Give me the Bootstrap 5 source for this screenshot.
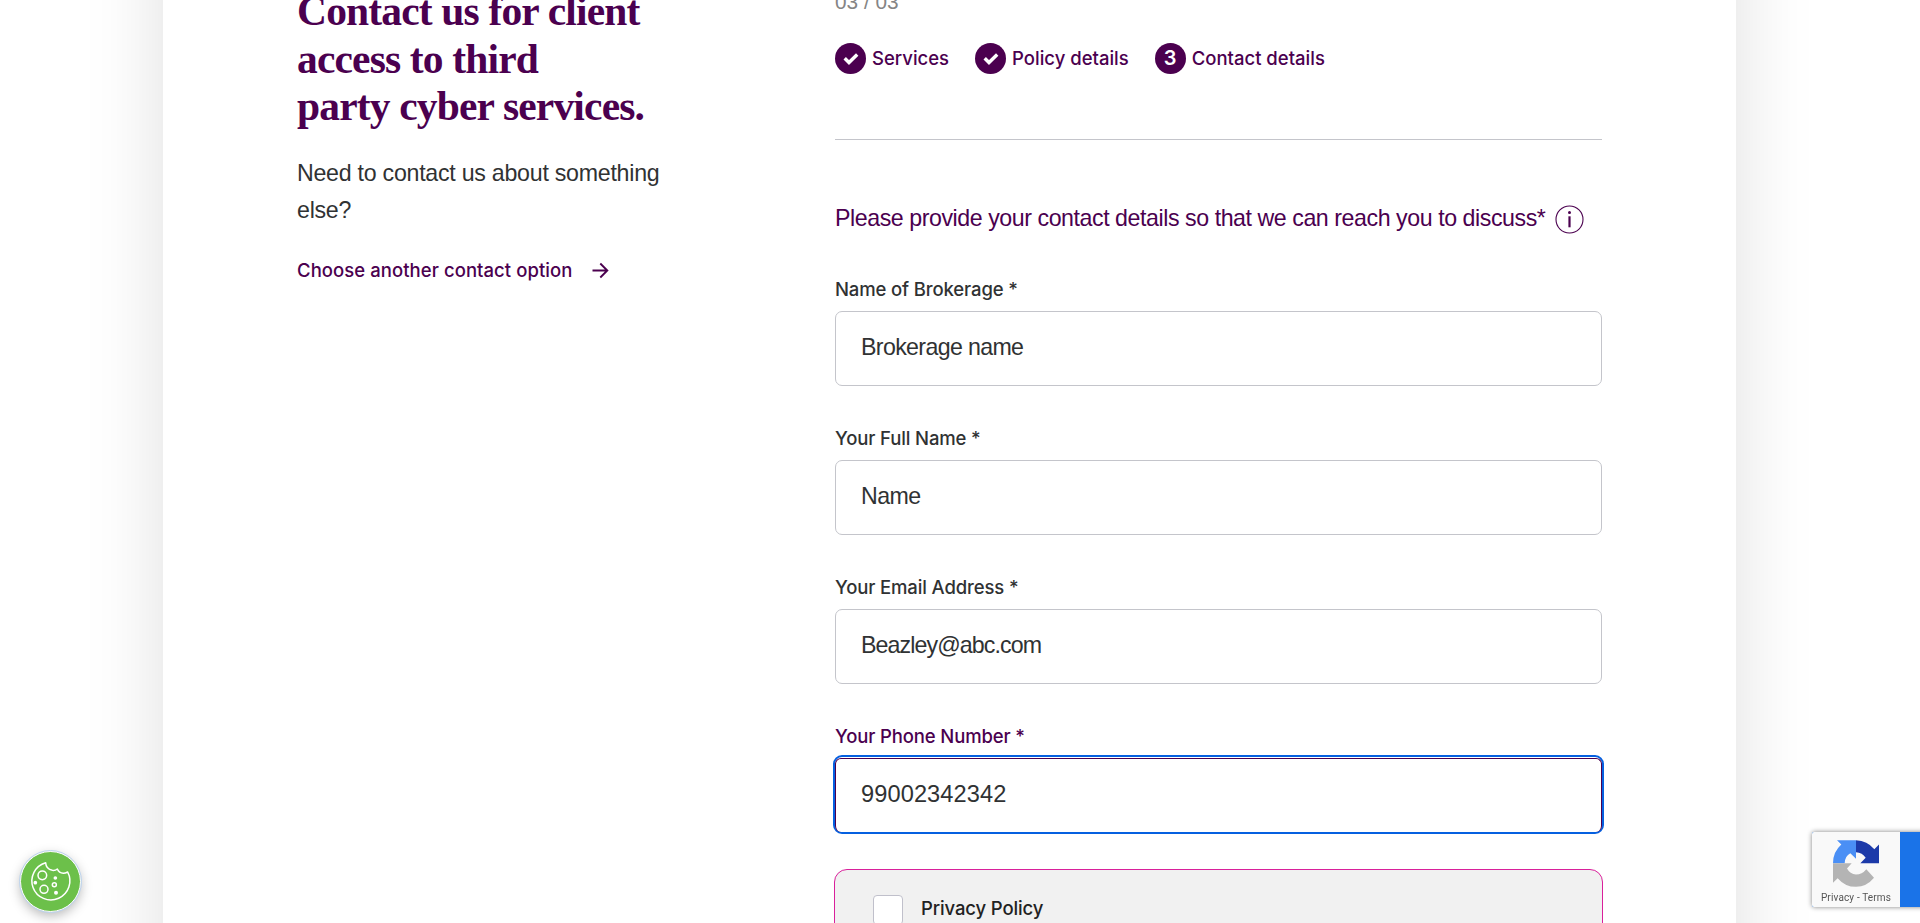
<!DOCTYPE html>
<html lang="en">
<head>
<meta charset="utf-8">
<meta name="viewport" content="width=device-width, initial-scale=1">
<title>Contact us</title>
<link href="https://cdn.jsdelivr.net/npm/bootstrap@5.3.0/dist/css/bootstrap.min.css" rel="stylesheet">
<style>
  :root { --plum: #4b004f; --ink: #303233; --line: #c4c5cb; --focus: #0560e0; }
  body { font-family: "Liberation Sans", sans-serif; color: var(--ink); font-size: 23.2px; background: #fff; }
  .viewport { height: 923px; }
  .panel { width: 1573px; height: 1400px; margin: -200px 0 0 163px; padding: 0 134px; background: #fff; box-shadow: 0 0 75px rgba(0,0,0,.13); }
  .intro { width: 400px; padding-top: 188px; }
  .intro h1 { font: 700 41.5px/47.5px "Liberation Serif", serif; letter-spacing: -.83px; color: var(--plum); margin: 0; white-space: nowrap; }
  .intro p { line-height: 37.6px; margin: 24px 0 28px; letter-spacing: -.26px; }
  .medium { font: 500 18.5px/25px Inter, sans-serif; letter-spacing: -.13px; }
  .plum { color: var(--plum); }
  .other-option { letter-spacing: .06px; }
  .form-col { width: 767px; padding-top: 190px; }
  .count { font-size: 20.8px; line-height: 24px; color: #858585; }
  .steps { margin-top: 29px; gap: 26px; height: 31px; letter-spacing: 0; }
  .step { gap: 6px; }
  .dot { width: 31px; height: 31px; background: var(--plum); color: #fff; font-weight: 600; font-size: 20px; }
  .rule { height: 1px; background: var(--line); margin-top: 65px; }
  .question { margin-top: 63px; height: 30px; line-height: 30px; letter-spacing: -.445px; white-space: nowrap; margin-bottom: 44px; }
  .field { margin-bottom: 40px; }
  .field label { display: block; margin-bottom: 9px; }
  .entry.form-control { height: 75px; border: 1px solid var(--line); border-radius: 7px; padding: 0 25px 2px; font-size: 23.2px; letter-spacing: -.9px; color: var(--ink); box-shadow: none; }
  #brokerage { letter-spacing: -.65px; }
  #fullname { letter-spacing: -.6px; }
  .ring { margin: -3px -2px 35px; border: 2px solid var(--focus); border-radius: 9px; padding-top: 1px; height: 79px; }
  .ring .entry.form-control { height: 74px; border-color: var(--plum); border-bottom: 0; border-radius: 6px; font-size: 23.6px; letter-spacing: .1px; padding-bottom: 3px; }
  .consent { height: 200px; margin: 0 -1px; border: 1px solid #d9209b; border-radius: 13px; background: #f1f1f1; padding: 25px 38px; color: #222; }
  .tick.form-check-input { width: 30px; height: 30px; border: 1px solid #c0c0cb; border-radius: 4px; margin: 0 18px 0 0; }
  .consent label { line-height: 27px; }
  .cookie { position: fixed; left: 19.5px; top: 850.5px; width: 61px; height: 61px; border: 1.5px solid #fff; outline: .5px solid #bcd3ee; background: #6cc04a; box-shadow: 0 4px 12px rgba(0,0,0,.28); }
  .cookie svg { margin-left: -1px; }
  .captcha { position: fixed; left: 1812px; top: 832px; width: 256px; height: 75px; border-radius: 2px; background: #1a73e8; box-shadow: 0 0 5px gray; overflow: hidden; }
  .captcha-logo { width: 88px; height: 75px; background: #f9f9f9; padding-top: 8px; }
  .captcha-text { font: 10px/12px Roboto, sans-serif; color: #555; letter-spacing: .15px; margin-top: 5px; }
</style>
</head>
<body>
<div class="viewport overflow-hidden">
  <main class="panel d-flex justify-content-between">
    <section class="intro">
      <h1>Contact us for client<br>access to third<br>party cyber services.</h1>
      <p>Need to contact us about something<br>else?</p>
      <a class="medium plum other-option d-flex align-items-center text-decoration-none" href="#">Choose another contact option
        <svg class="ms-3" width="24" height="17" viewBox="0 0 24 17" fill="none" stroke="currentColor" stroke-width="1.9"><path d="M4.5 8.5h14.5M12.3 1.5l7 7-7 7"/></svg>
      </a>
    </section>

    <section class="form-col me-0">
      <div class="count">03 / 03</div>
      <div class="medium plum"><div class="steps d-flex">
        <div class="step d-flex align-items-center">
          <span class="dot rounded-circle d-flex align-items-center justify-content-center"><svg width="16" height="14" viewBox="0 0 16 14" fill="none" stroke="#fff" stroke-width="3.4"><path d="M1.7 6.2 6 10.5 14.2 2.5"/></svg></span>
          <span>Services</span>
        </div>
        <div class="step d-flex align-items-center">
          <span class="dot rounded-circle d-flex align-items-center justify-content-center"><svg width="16" height="14" viewBox="0 0 16 14" fill="none" stroke="#fff" stroke-width="3.4"><path d="M1.7 6.2 6 10.5 14.2 2.5"/></svg></span>
          <span>Policy details</span>
        </div>
        <div class="step d-flex align-items-center">
          <span class="dot rounded-circle d-flex align-items-center justify-content-center">3</span>
          <span>Contact details</span>
        </div>
      </div></div>
      <div class="rule"></div>

      <div class="question plum d-flex align-items-center">
        <span>Please provide your contact details so that we can reach you to discuss*</span>
        <svg style="margin:2px 0 0 10px" width="29" height="29" viewBox="0 0 29 29" fill="none" stroke="currentColor"><circle cx="14.5" cy="14.5" r="13.5" stroke-width="1.1"/><path d="M14.5 11.3v11" stroke-width="2.2"/><circle cx="14.5" cy="7.6" r="1.5" fill="currentColor" stroke="none"/></svg>
      </div>

      <div class="field"><label class="medium" for="brokerage">Name of Brokerage *</label><input id="brokerage" class="form-control entry" value="Brokerage name"></div>
      <div class="field"><label class="medium" for="fullname">Your Full Name *</label><input id="fullname" class="form-control entry" value="Name"></div>
      <div class="field"><label class="medium" for="email">Your Email Address *</label><input id="email" class="form-control entry" value="Beazley@abc.com"></div>
      <div class="field mb-0"><label class="medium plum" for="phone">Your Phone Number *</label><div class="ring"><input id="phone" class="form-control entry" value="99002342342"></div></div>

      <div class="consent">
        <label class="d-flex medium"><input type="checkbox" class="form-check-input tick"><span>Privacy Policy</span></label>
      </div>
    </section>
  </main>
</div>

<button class="cookie rounded-circle p-0" aria-label="Cookie settings">
  <svg class="d-block" width="58" height="58" viewBox="20 20 174 174" fill="none" stroke="#fff" stroke-width="4.5" stroke-linejoin="round">
    <path d="M97 52A57 57 0 1 0 163 80Q156 84 150 84Q137 83 132 71Q126 76 117 75Q98 71 97 52Z"/>
    <circle cx="87" cy="90" r="13"/><circle cx="92" cy="132" r="12"/><circle cx="123" cy="118" r="6"/>
    <g fill="#fff" stroke="none"><circle cx="126" cy="98" r="5.5"/><circle cx="66" cy="112" r="5.5"/><circle cx="128" cy="142" r="6"/></g>
  </svg>
</button>

<div class="captcha">
  <div class="captcha-logo text-center">
    <svg class="d-block mx-auto" width="46" height="47" viewBox="99 45 138 140">
      <path fill="#4a8ff5" d="M111 45H168V101L151 84Q135 92 134 114H99Q99 80 124 58Z"/>
      <path fill="#1c3aa9" d="M168 45Q202 46 223 72L237 58V114H181L197 98Q187 82 168 81Z"/>
      <path fill="#b4b4b4" d="M99 114H155L141 130Q150 147 168 148Q186 148 199 132L222 158Q200 185 168 185Q135 185 113 159L99 173Z"/>
    </svg>
    <div class="captcha-text">Privacy - Terms</div>
  </div>
</div>
<script src="https://cdn.jsdelivr.net/npm/bootstrap@5.3.0/dist/js/bootstrap.bundle.min.js"></script>
</body>
</html>
